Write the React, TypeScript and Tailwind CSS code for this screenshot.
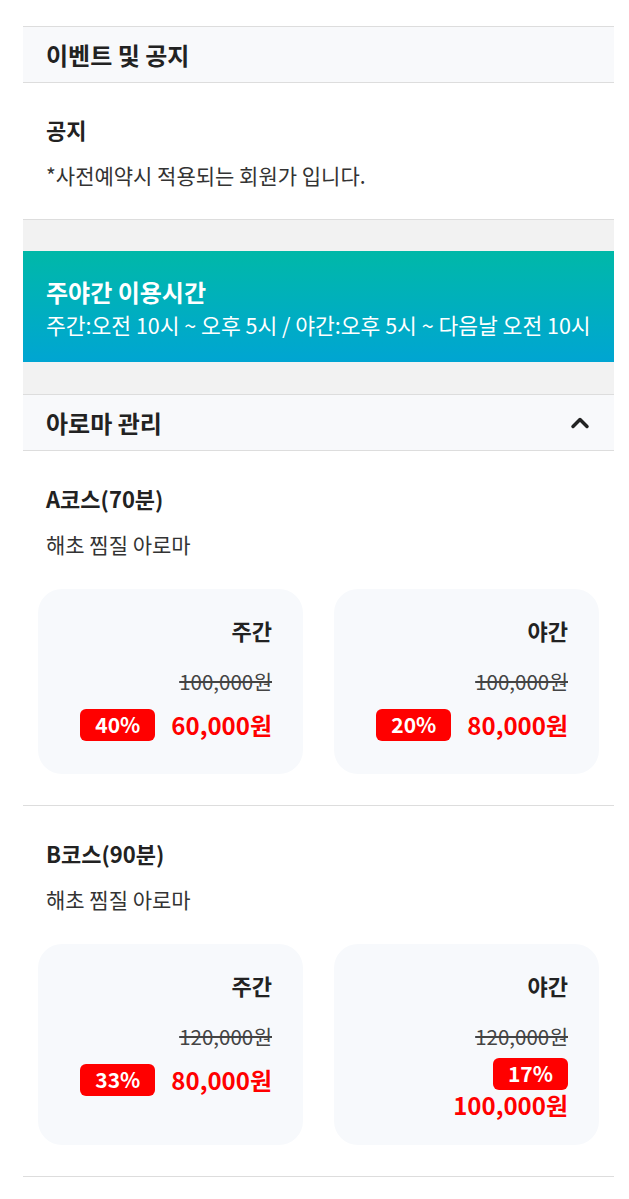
import { LuChevronUp } from "react-icons/lu";

type Price = {
  label: string;
  original: string;
  discount: string;
  price: string;
};

type Course = {
  name: string;
  desc: string;
  prices: Price[];
};

const COURSES: Course[] = [
  {
    name: "A코스(70분)",
    desc: "해초 찜질 아로마",
    prices: [
      { label: "주간", original: "100,000원", discount: "40%", price: "60,000원" },
      { label: "야간", original: "100,000원", discount: "20%", price: "80,000원" },
    ],
  },
  {
    name: "B코스(90분)",
    desc: "해초 찜질 아로마",
    prices: [
      { label: "주간", original: "120,000원", discount: "33%", price: "80,000원" },
      { label: "야간", original: "120,000원", discount: "17%", price: "100,000원" },
    ],
  },
];

const PriceCard = ({ item }: { item: Price }) => (
  <div className="flex flex-col items-end rounded-[24px] bg-[#f7f9fc] px-[31px] pt-[27px] pb-[28px]">
    <div className="text-[22px] font-bold leading-[28px] text-[#222]">{item.label}</div>
    <div className="mt-[25px] text-[20.5px] leading-[24px] text-[#444] line-through">{item.original}</div>
    <div className="mt-[10px] flex min-h-[43px] flex-wrap items-center justify-end gap-x-4 gap-y-[2px]">
      <span className="flex h-8 w-[75px] items-center justify-center rounded-[6px] bg-[#ff0000] text-[21px] font-bold text-white">
        {item.discount}
      </span>
      <span className="text-[24px] font-bold leading-[25px] text-[#ff0000]">{item.price}</span>
    </div>
  </div>
);

const App = () => {
  return (
    <div
      className="min-h-[1199px] bg-white pl-[23px] pr-[15px] pt-[26px]"
      style={{ fontFamily: '"Noto Sans CJK KR", "Noto Sans", sans-serif' }}
    >
      <div className="border-t border-[#dddddd]">
        <div className="flex h-[56px] items-center border-b border-[#dddddd] bg-[#f8f9fb] px-[23px]">
          <h2 className="text-[24px] font-bold text-[#222]">이벤트 및 공지</h2>
        </div>

        <div className="border-b border-[#dddddd] px-[23px] pt-[32px] pb-[31px]">
          <h3 className="text-[22px] font-bold leading-[28px] text-[#222]">공지</h3>
          <p className="mt-[19px] text-[21px] leading-[26px] text-[#333]">*사전예약시 적용되는 회원가 입니다.</p>
        </div>

        <div className="h-[31px] bg-[#f2f2f2]" />

        <div className="bg-gradient-to-b from-[#00b8a8] to-[#00a5d2] px-[23px] pt-[26px] pb-[22px] text-white">
          <div className="text-[24px] font-bold leading-[30px]">주야간 이용시간</div>
          <div className="mt-[3px] whitespace-nowrap text-[21.5px] leading-[30px]">
            주간:오전 10시 ~ 오후 5시 / 야간:오후 5시 ~ 다음날 오전 10시
          </div>
        </div>

        <div className="h-[32px] bg-[#f2f2f2]" />

        <div className="flex h-[57px] items-center justify-between border-y border-[#dddddd] bg-[#f8f9fb] pl-[23px] pr-[20px]">
          <h2 className="text-[24px] font-bold text-[#222]">아로마 관리</h2>
          <LuChevronUp className="h-7 w-7 text-[#222]" strokeWidth={3} />
        </div>

        {COURSES.map((course) => (
          <div key={course.name} className="border-b border-[#dddddd] px-[15px] pt-[33px] pb-[31px]">
            <div className="px-[8px]">
              <h3 className="text-[22px] font-bold leading-[28px] text-[#222]">{course.name}</h3>
              <p className="mt-[19px] text-[21px] leading-[26px] text-[#333]">{course.desc}</p>
            </div>
            <div className="mt-[32px] grid grid-cols-2 gap-[31px]">
              {course.prices.map((p) => (
                <PriceCard key={p.label} item={p} />
              ))}
            </div>
          </div>
        ))}
      </div>
    </div>
  );
};

export default App;
